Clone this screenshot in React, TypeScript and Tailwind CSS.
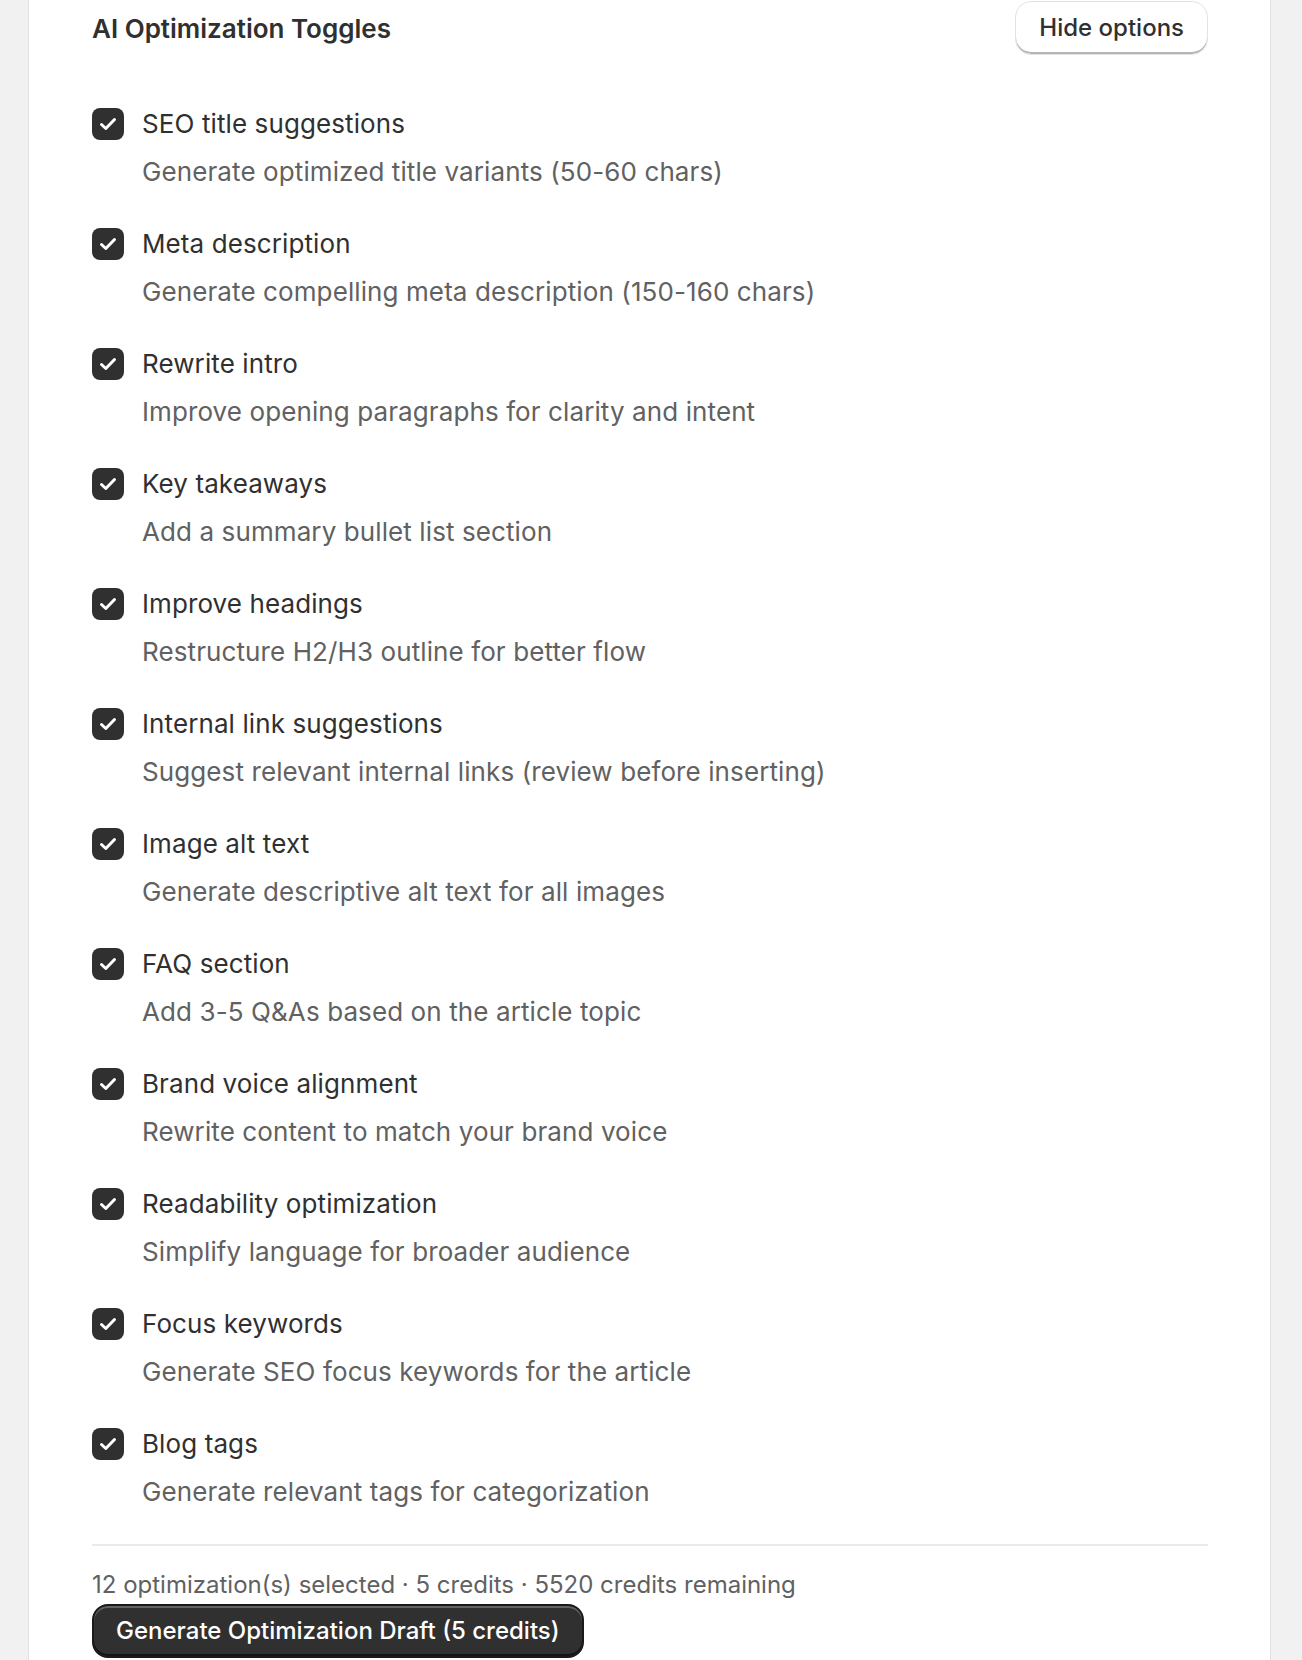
const OPTIONS: { label: string; hint: string }[] = [
  { label: "SEO title suggestions", hint: "Generate optimized title variants (50-60 chars)" },
  { label: "Meta description", hint: "Generate compelling meta description (150-160 chars)" },
  { label: "Rewrite intro", hint: "Improve opening paragraphs for clarity and intent" },
  { label: "Key takeaways", hint: "Add a summary bullet list section" },
  { label: "Improve headings", hint: "Restructure H2/H3 outline for better flow" },
  { label: "Internal link suggestions", hint: "Suggest relevant internal links (review before inserting)" },
  { label: "Image alt text", hint: "Generate descriptive alt text for all images" },
  { label: "FAQ section", hint: "Add 3-5 Q&As based on the article topic" },
  { label: "Brand voice alignment", hint: "Rewrite content to match your brand voice" },
  { label: "Readability optimization", hint: "Simplify language for broader audience" },
  { label: "Focus keywords", hint: "Generate SEO focus keywords for the article" },
  { label: "Blog tags", hint: "Generate relevant tags for categorization" },
]

function CheckOption({ label, hint }: { label: string; hint: string }) {
  return (
    <label className="flex flex-col cursor-pointer">
      <span className="flex items-center gap-[18px] h-[40px]">
        <span className="flex items-center justify-center w-[32px] h-[32px] rounded-[8px] bg-[#303030] shrink-0">
          <svg width="18" height="14" viewBox="0 0 18 14" fill="none" aria-hidden>
            <path
              d="M2.5 7.5 L6.8 11.5 L15.5 2.5"
              stroke="#fff"
              strokeWidth="3"
              strokeLinecap="round"
              strokeLinejoin="round"
            />
          </svg>
        </span>
        <span className="text-[26px] leading-[40px] tracking-[0.1px] text-[#303030]">{label}</span>
      </span>
      <span className="mt-[8px] pl-[50px] text-[26px] leading-[40px] tracking-[0.1px] text-[#616161]">
        {hint}
      </span>
    </label>
  )
}

export default function App() {
  return (
    <div
      className="min-h-[1660px] bg-[#f1f1f1] pl-[28px] pr-[31px]"
      style={{ fontFamily: "Inter, 'Noto Sans', sans-serif" }}
    >
      <section className="min-h-[1660px] bg-white border-x border-[#e1e1e1] pt-[1px] pl-[63px] pr-[62px]">
        <div className="flex items-center justify-between h-[54px]">
          <h2 className="text-[26px] font-semibold text-[#303030]">AI Optimization Toggles</h2>
          <button
            type="button"
            className="h-[54px] px-[23px] rounded-[16px] bg-white text-[24px] font-medium text-[#303030] border border-[#e3e3e3] shadow-[inset_0_-2px_0_#b5b5b5]"
          >
            Hide options
          </button>
        </div>

        <div className="mt-[49px] flex flex-col gap-[32px]">
          {OPTIONS.map((o) => (
            <CheckOption key={o.label} label={o.label} hint={o.hint} />
          ))}
        </div>

        <div className="mt-[32px] h-[2px] bg-[#ebebeb]" />

        <div className="mt-[20px]">
          <p className="text-[24px] leading-[38px] text-[#616161]">
            12 optimization(s) selected · 5 credits · 5520 credits remaining
          </p>
          <button
            type="button"
            className="h-[54px] px-[22px] rounded-[16px] bg-[#303030] text-[24px] font-medium text-white border-2 border-[#1a1a1a] shadow-[inset_0_2px_0_rgba(255,255,255,0.25),inset_0_-2px_0_rgba(0,0,0,0.6)]"
          >
            Generate Optimization Draft (5 credits)
          </button>
        </div>
      </section>
    </div>
  )
}
